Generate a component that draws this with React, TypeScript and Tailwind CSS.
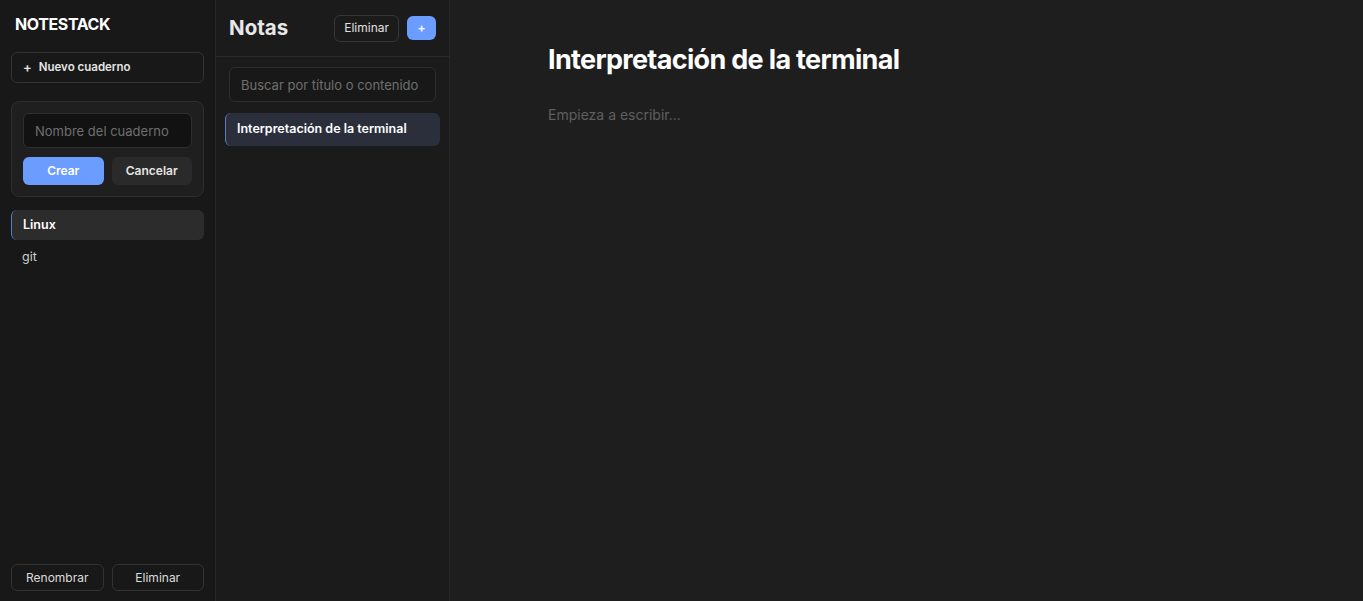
import * as React from 'react'

const font = { fontFamily: 'Inter, "Noto Sans", sans-serif' }

function Sidebar() {
  const [name, setName] = React.useState('')
  return (
    <aside className="w-[216px] shrink-0 h-full flex flex-col bg-[#181818] border-r border-[#262626] px-[11px]">
      <h1 className="pt-[14px] pl-[4px] text-[16px] leading-5 font-bold text-white tracking-tight">NOTESTACK</h1>
      <button className="mt-[18px] h-[31px] flex items-center gap-[7px] px-[11px] rounded-md border border-[#333] text-[11.5px] font-semibold text-[#e5e5e5]">
        <span className="text-[13px]">+</span>
        Nuevo cuaderno
      </button>
      <div className="mt-[18px] rounded-lg border border-[#2e2e2e] bg-[#1f1f1f] p-[11px]">
        <input
          value={name}
          onChange={(e) => setName(e.target.value)}
          placeholder="Nombre del cuaderno"
          className="w-full h-[35px] rounded-md border border-[#2e2e2e] bg-[#121212] px-[11px] text-[13px] text-[#ddd] placeholder:text-[#6f6f6f] outline-none"
        />
        <div className="mt-[9px] grid grid-cols-2 gap-2">
          <button className="h-[28px] rounded-md bg-[#6b9cff] text-[12px] font-semibold text-white">Crear</button>
          <button className="h-[28px] rounded-md bg-[#2a2a2a] text-[12px] font-semibold text-[#e5e5e5]">Cancelar</button>
        </div>
      </div>
      <div className="mt-[13px] flex flex-col gap-[2px]">
        <div className="h-[30px] flex items-center px-[11px] rounded-md bg-[#2c2c2c] border-l border-[#5b7cc4] text-[12.5px] font-semibold text-white">
          Linux
        </div>
        <div className="h-[30px] flex items-center px-[11px] text-[12.5px] text-[#cfcfcf]">git</div>
      </div>
      <div className="mt-auto mb-[10px] grid grid-cols-2 gap-2">
        <button className="h-[27px] rounded-md border border-[#333] text-[12px] text-[#dcdcdc]">Renombrar</button>
        <button className="h-[27px] rounded-md border border-[#333] text-[12px] text-[#dcdcdc]">Eliminar</button>
      </div>
    </aside>
  )
}

function NotesColumn() {
  return (
    <section className="w-[234px] shrink-0 h-full flex flex-col bg-[#1b1b1b] border-r border-[#262626]">
      <div className="h-[57px] flex items-center justify-between pl-[13px] pr-[13px] border-b border-[#2a2a2a]">
        <h2 className="text-[20.5px] font-bold text-[#e8e8e8]">Notas</h2>
        <div className="flex items-center gap-2">
          <button className="h-[27px] px-[9px] rounded-md border border-[#363636] text-[12px] text-[#e0e0e0]">Eliminar</button>
          <button className="h-[24px] w-[29px] rounded-md bg-[#6b9cff] text-[12px] font-semibold text-white">+</button>
        </div>
      </div>
      <div className="px-[13px] pt-[10px]">
        <input
          placeholder="Buscar por título o contenido"
          className="w-full h-[35px] rounded-md border border-[#2e2e2e] bg-[#181818] px-[11px] text-[13px] text-[#ddd] placeholder:text-[#6f6f6f] outline-none"
        />
      </div>
      <div className="px-[9px] pt-[11px]">
        <div className="h-[33px] flex items-center px-[11px] rounded-md bg-[#2a2f3b] border-l border-[#5b7cc4] text-[12.5px] font-semibold text-white">
          Interpretación de la terminal
        </div>
      </div>
    </section>
  )
}

function Editor() {
  return (
    <main className="flex-1 h-full bg-[#1e1e1e] pl-[98px] pt-[42px]">
      <h1 className="text-[27px] leading-9 font-bold tracking-tight text-white">Interpretación de la terminal</h1>
      <textarea
        autoFocus
        placeholder="Empieza a escribir..."
        className="mt-[26px] w-[700px] h-[300px] resize-none bg-transparent text-[14px] text-[#ddd] placeholder:text-[#5f5f5f] outline-none caret-[#9a9a9a]"
      />
    </main>
  )
}

export default function App() {
  return (
    <div className="w-full h-screen flex overflow-hidden" style={font}>
      <Sidebar />
      <NotesColumn />
      <Editor />
    </div>
  )
}
